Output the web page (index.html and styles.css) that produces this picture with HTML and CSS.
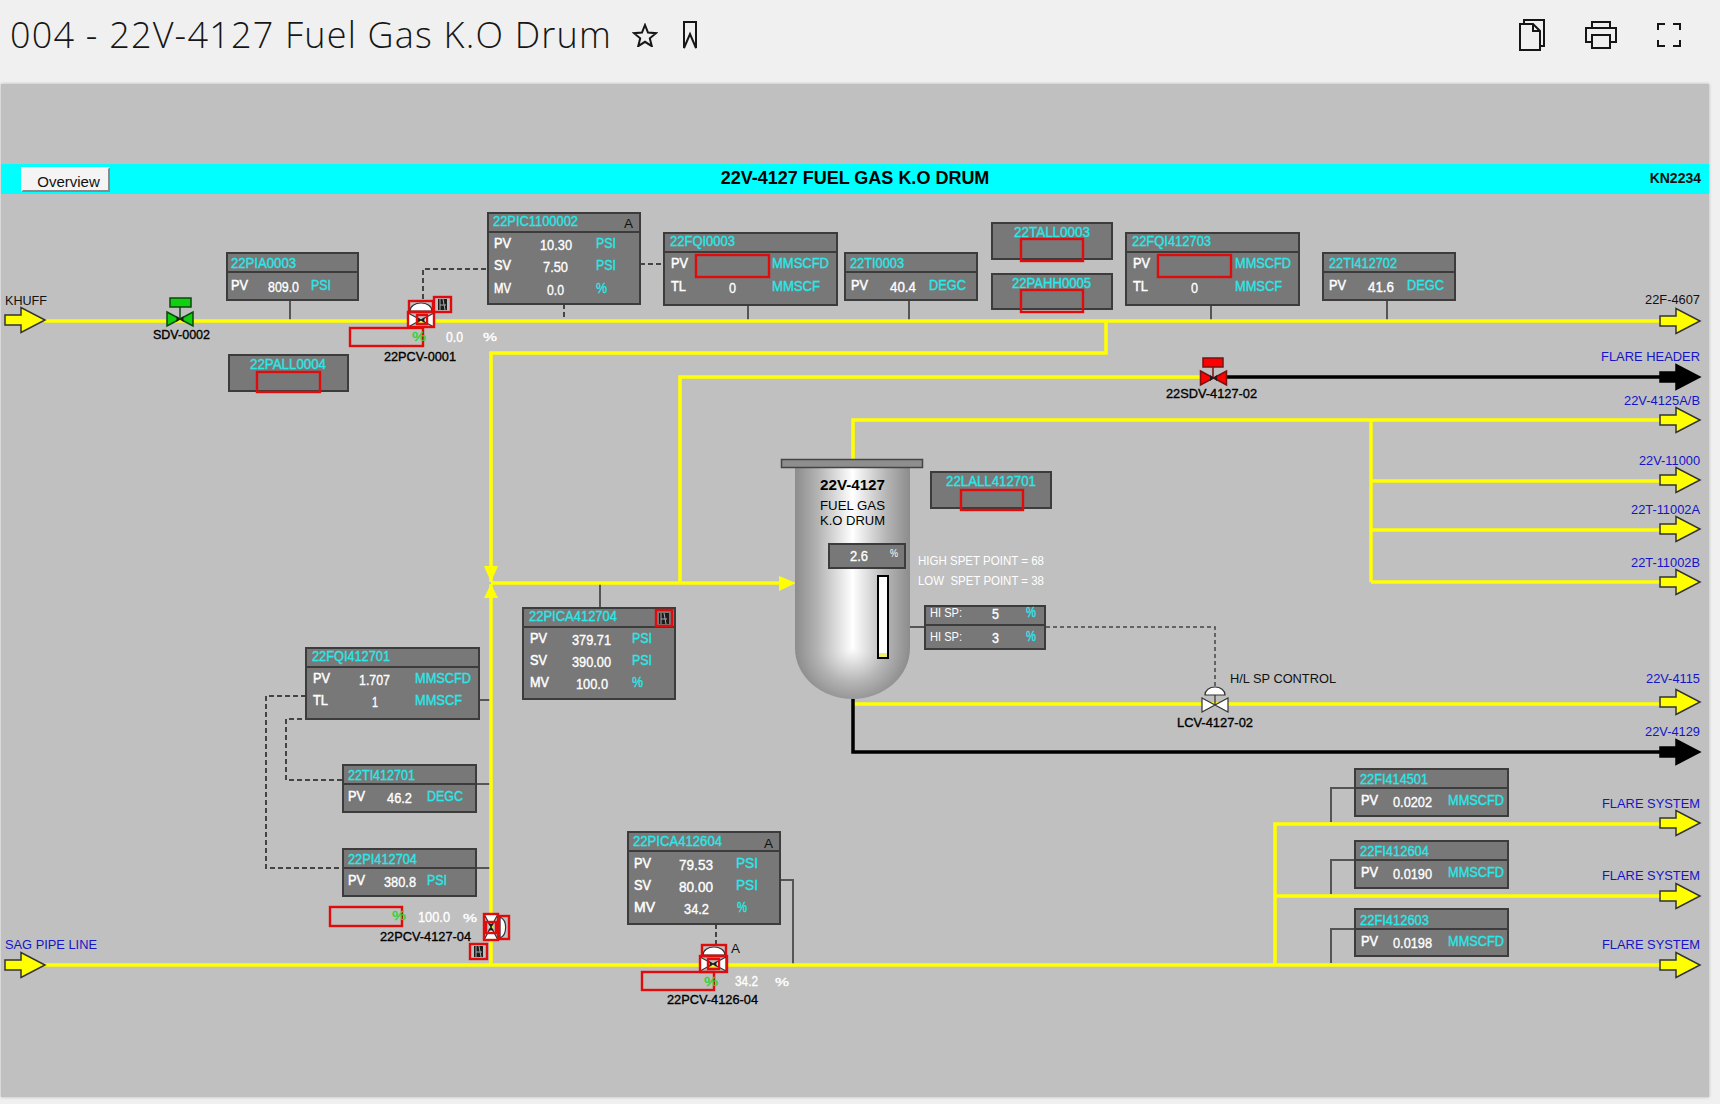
FILE: index.html
```html
<!DOCTYPE html>
<html lang="en">
<head>
    <meta charset="UTF-8">
    <meta name="viewport" content="width=device-width, initial-scale=1.0">
    <title>004 - 22V-4127 Fuel Gas K.O Drum</title>
    <link rel="stylesheet" href="styles.css">
</head>
<body>
    <header class="topbar">
        <h1 class="page-title">004 - 22V-4127 Fuel Gas K.O Drum</h1>
        <div class="title-icons">
            <svg class="icon-star" viewBox="0 0 26 24"><path d="M13 2l3 7.6 8 .6-6.2 5.1 2 7.9L13 18.8l-6.8 4.4 2-7.9L2 10.200l8-.6z"/></svg>
            <svg class="icon-mark" viewBox="0 0 14 28"><path d="M1 1h12v26L7 13 1 27zM1 19"/></svg>
        </div>
        <div class="tools">
            <svg class="icon-copy" viewBox="0 0 26 32"><path d="M5 4V1h20v26h-4"/><path d="M1 5h13l7 7v19H1z"/><path d="M14 5v7h7"/></svg>
            <svg class="icon-print" viewBox="0 0 32 28"><path d="M7 7V1h18v6"/><path d="M7 21H1V7h30v14h-6"/><path d="M7 14h18v13H7z"/></svg>
            <svg class="icon-full" viewBox="0 0 24 24"><path d="M1 7V1h7M16 1h7v6M23 17v6h-7M8 23H1v-6"/></svg>
        </div>
    </header>

    <main class="canvas">
        <div class="banner">
            <button class="overview">Overview</button>
            <div class="banner-title">22V-4127 FUEL GAS K.O DRUM</div>
            <div class="banner-tag">KN2234</div>
        </div>

        <svg class="diagram" viewBox="1 84 1708 1013">
            <defs>
                <path id="arrow" d="M-40-5H-24V-12.500L0 0-24 12.500V5H-40z"/>
                <path id="bowtie-plain" d="M-13-7L13 7V-7L-13 7z"/>
                <g id="bowtie">
                    <path d="M-13-7L13 7V-7L-13 7z"/>
                    <path class="core" d="M-3.500-3L3.500 3V-3L-3.500 3z"/>
                </g>
                <linearGradient id="drum-body" gradientUnits="userSpaceOnUse" x1="795" y1="0" x2="910" y2="0">
                    <stop offset="0" stop-color="#8c8c8c"/>
                    <stop offset=".2" stop-color="#b4b4b4"/>
                    <stop offset=".5" stop-color="#fff"/>
                    <stop offset=".8" stop-color="#b4b4b4"/>
                    <stop offset="1" stop-color="#8c8c8c"/>
                </linearGradient>
                <radialGradient id="drum-cap" gradientUnits="userSpaceOnUse" cx="852.500" cy="648" r="57.500">
                    <stop offset="0" stop-color="#fff"/>
                    <stop offset=".6" stop-color="#b4b4b4"/>
                    <stop offset="1" stop-color="#8c8c8c"/>
                </radialGradient>
            </defs>

            <!-- signal lines -->
            <path class="wire" d="M290 300V320M748 305V320M909 300V320M1211 305V320M1387 300V320"/>
            <path class="wire" d="M600 584V607M479 700H490M476 784H490M476 868H490"/>
            <path class="wire" d="M781 880H793V964M909 627H925"/>
            <path class="wire" d="M1355 788H1331V822M1355 860H1331V894M1355 929H1331V963"/>
            <path class="dash" d="M486 269H423V300M564 304V320M640 264H664M716 924V945"/>
            <path class="dash" d="M306 696H266V868H343M310 719H286V780H343"/>
            <path class="dash thin" d="M1046 627H1215V686"/>

            <!-- pipes -->
            <path class="pipe" d="M44 321H1662"/>
            <path class="pipe" d="M1106 321V353H491V582"/>
            <path class="pipe" d="M491 584V965"/>
            <path class="pipe" d="M491 583H780"/>
            <path class="pipe" d="M680 583V377H1202"/>
            <path class="pipe" d="M853 459V420H1662"/>
            <path class="pipe" d="M1371 420V582"/>
            <path class="pipe" d="M1371 481H1662"/>
            <path class="pipe" d="M1371 530H1662"/>
            <path class="pipe" d="M1371 582H1662"/>
            <path class="pipe" d="M853 704H1662"/>
            <path class="pipe" d="M44 965H1662"/>
            <path class="pipe" d="M1662 824H1275V965"/>
            <path class="pipe" d="M1275 896H1662"/>
            <path class="pipe-black" d="M1226 377H1662"/>
            <path class="pipe-black" d="M853 699V752H1662"/>

            <!-- pipe ends -->
            <use class="end" href="#arrow" x="45" y="320"/>
            <use class="end" href="#arrow" x="45" y="965"/>
            <use class="end" href="#arrow" x="1700" y="321"/>
            <use class="end black" href="#arrow" x="1700" y="377"/>
            <use class="end" href="#arrow" x="1700" y="420"/>
            <use class="end" href="#arrow" x="1700" y="480"/>
            <use class="end" href="#arrow" x="1700" y="529"/>
            <use class="end" href="#arrow" x="1700" y="582"/>
            <use class="end" href="#arrow" x="1700" y="702"/>
            <use class="end black" href="#arrow" x="1700" y="752"/>
            <use class="end" href="#arrow" x="1700" y="823"/>
            <use class="end" href="#arrow" x="1700" y="896"/>
            <use class="end" href="#arrow" x="1700" y="965"/>
            <path class="head" d="M484 566H498L491 582z"/>
            <path class="head" d="M484 598H498L491 584z"/>
            <path class="head" d="M779 576L796 583 779 591z"/>

            <!-- line names -->
            <text class="name plain" x="5" y="305" textLength="42" lengthAdjust="spacingAndGlyphs">KHUFF</text>
            <text class="name plain" x="1645" y="304" textLength="55" lengthAdjust="spacingAndGlyphs">22F-4607</text>
            <text class="line-name" x="1601" y="361" textLength="99" lengthAdjust="spacingAndGlyphs">FLARE HEADER</text>
            <text class="line-name" x="1624" y="405" textLength="76" lengthAdjust="spacingAndGlyphs">22V-4125A/B</text>
            <text class="line-name" x="1639" y="465" textLength="61" lengthAdjust="spacingAndGlyphs">22V-11000</text>
            <text class="line-name" x="1631" y="514" textLength="69" lengthAdjust="spacingAndGlyphs">22T-11002A</text>
            <text class="line-name" x="1631" y="567" textLength="69" lengthAdjust="spacingAndGlyphs">22T-11002B</text>
            <text class="line-name" x="1646" y="683" textLength="54" lengthAdjust="spacingAndGlyphs">22V-4115</text>
            <text class="line-name" x="1645" y="736" textLength="55" lengthAdjust="spacingAndGlyphs">22V-4129</text>
            <text class="line-name" x="1602" y="808" textLength="98" lengthAdjust="spacingAndGlyphs">FLARE SYSTEM</text>
            <text class="line-name" x="1602" y="880" textLength="98" lengthAdjust="spacingAndGlyphs">FLARE SYSTEM</text>
            <text class="line-name" x="1602" y="949" textLength="98" lengthAdjust="spacingAndGlyphs">FLARE SYSTEM</text>
            <text class="line-name" x="5" y="949" textLength="92" lengthAdjust="spacingAndGlyphs">SAG PIPE LINE</text>

            <!-- SDV-0002 -->
            <g class="green-valve">
                <path class="stem" d="M180 307V318"/>
                <rect x="170" y="298" width="21" height="9"/>
                <use href="#bowtie" x="180" y="319"/>
            </g>
            <text class="name" x="153" y="339" textLength="57" lengthAdjust="spacingAndGlyphs">SDV-0002</text>

            <!-- 22SDV-4127-02 -->
            <g class="red-valve">
                <path class="stem" d="M1213 367V378"/>
                <rect x="1203" y="358" width="20" height="9"/>
                <use href="#bowtie" x="1213.500" y="378"/>
            </g>
            <text class="name" x="1166" y="398" textLength="91" lengthAdjust="spacingAndGlyphs">22SDV-4127-02</text>

            <!-- LCV-4127-02 -->
            <g class="white-valve">
                <path class="stem" d="M1215 695V705"/>
                <path d="M1205 695A10 8 0 0 1 1225 695z"/>
                <use href="#bowtie-plain" x="1215" y="705"/>
            </g>
            <text class="name" x="1177" y="727" textLength="76" lengthAdjust="spacingAndGlyphs">LCV-4127-02</text>
            <text class="name plain" x="1230" y="683" textLength="106" lengthAdjust="spacingAndGlyphs">H/L SP CONTROL</text>

            <!-- 22PCV-0001 -->
            <g class="white-valve">
                <path d="M410 311A11 8 0 0 1 432 311z"/>
                <use href="#bowtie" x="421" y="320"/>
            </g>
            <rect class="alarm" x="409" y="301" width="24" height="11"/>
            <rect class="alarm" x="408" y="312" width="26" height="15"/>
            <rect class="alarm" x="417" y="315" width="10" height="9"/>
            <rect class="alarm" x="434" y="297" width="17" height="15"/>
            <rect class="glyph" x="438" y="299" width="9" height="11"/>
            <path class="glyph-mark" d="M440 299V310M443 299L445 310M440 305H446"/>
            <rect class="alarm" x="350" y="328" width="73" height="18"/>
            <text class="pct" x="412" y="341" textLength="14" lengthAdjust="spacingAndGlyphs">%</text>
            <text class="readout" x="446" y="342" textLength="17" lengthAdjust="spacingAndGlyphs">0.0</text>
            <text class="readout small" x="483" y="341" textLength="14" lengthAdjust="spacingAndGlyphs">%</text>
            <text class="name" x="384" y="361" textLength="72" lengthAdjust="spacingAndGlyphs">22PCV-0001</text>

            <!-- 22PCV-4127-04 -->
            <g class="white-valve">
                <path d="M500 917A8 11 0 0 1 500 938z"/>
                <use href="#bowtie" transform="translate(491 927) rotate(90)"/>
            </g>
            <rect class="alarm" x="484" y="914" width="14" height="26"/>
            <rect class="alarm" x="486" y="922" width="10" height="11"/>
            <rect class="alarm" x="499" y="916" width="10" height="23"/>
            <rect class="alarm" x="470" y="944" width="17" height="15"/>
            <rect class="glyph" x="474" y="946" width="9" height="11"/>
            <path class="glyph-mark" d="M476 946V957M479 946L481 957M476 952H482"/>
            <rect class="alarm" x="330" y="907" width="72" height="19"/>
            <text class="pct" x="392" y="920" textLength="14" lengthAdjust="spacingAndGlyphs">%</text>
            <text class="readout" x="418" y="922" textLength="32" lengthAdjust="spacingAndGlyphs">100.0</text>
            <text class="readout small" x="463" y="922" textLength="14" lengthAdjust="spacingAndGlyphs">%</text>
            <text class="name" x="380" y="941" textLength="91" lengthAdjust="spacingAndGlyphs">22PCV-4127-04</text>

            <!-- 22PCV-4126-04 -->
            <g class="white-valve">
                <path d="M703 955A11 8 0 0 1 725 955z"/>
                <use href="#bowtie" x="713" y="964"/>
            </g>
            <rect class="alarm" x="702" y="945" width="24" height="11"/>
            <rect class="alarm" x="700" y="956" width="27" height="16"/>
            <rect class="alarm" x="708" y="959" width="11" height="10"/>
            <rect class="alarm" x="642" y="972" width="72" height="18"/>
            <text class="pct" x="704" y="986" textLength="14" lengthAdjust="spacingAndGlyphs">%</text>
            <text class="readout" x="735" y="986" textLength="23" lengthAdjust="spacingAndGlyphs">34.2</text>
            <text class="readout small" x="775" y="986" textLength="14" lengthAdjust="spacingAndGlyphs">%</text>
            <text class="name plain" x="731" y="953" textLength="9" lengthAdjust="spacingAndGlyphs">A</text>
            <text class="name" x="667" y="1004" textLength="91" lengthAdjust="spacingAndGlyphs">22PCV-4126-04</text>

            <!-- drum -->
            <path fill="url(#drum-body)" d="M795 467H910V648H795z"/>
            <path fill="url(#drum-cap)" d="M795 648A57.500 51 0 0 0 910 648z"/>
            <rect class="flange" x="781.500" y="459.500" width="141" height="8"/>
            <text class="drum-name strong" x="820" y="490" textLength="65" lengthAdjust="spacingAndGlyphs">22V-4127</text>
            <text class="drum-name" x="820" y="510" textLength="65" lengthAdjust="spacingAndGlyphs">FUEL GAS</text>
            <text class="drum-name" x="820" y="525" textLength="65" lengthAdjust="spacingAndGlyphs">K.O DRUM</text>
            <rect class="box" x="829" y="544" width="76" height="24"/>
            <text class="readout big" x="850" y="561" textLength="18" lengthAdjust="spacingAndGlyphs">2.6</text>
            <text class="readout tiny" x="890" y="557" textLength="8" lengthAdjust="spacingAndGlyphs">%</text>
            <rect class="level" x="878" y="576" width="10" height="82"/>
            <rect class="level-fill" x="879" y="653" width="8" height="4"/>
            <text class="note" x="918" y="565" textLength="126" lengthAdjust="spacingAndGlyphs">HIGH SPET POINT = 68</text>
            <text class="note" x="918" y="585" textLength="126" lengthAdjust="spacingAndGlyphs" xml:space="preserve">LOW  SPET POINT = 38</text>

            <!-- 22PIA0003 -->
            <rect class="box" x="227" y="253" width="131" height="47"/>
            <path class="rule" d="M227 272H358"/>
            <text class="tag" x="231" y="268" textLength="65" lengthAdjust="spacingAndGlyphs">22PIA0003</text>
            <text class="key" x="231" y="290" textLength="17" lengthAdjust="spacingAndGlyphs">PV</text>
            <text class="val" x="268" y="292" textLength="31" lengthAdjust="spacingAndGlyphs">809.0</text>
            <text class="unit" x="311" y="290" textLength="20" lengthAdjust="spacingAndGlyphs">PSI</text>

            <!-- 22PALL0004 -->
            <rect class="box" x="229" y="355" width="119" height="36"/>
            <text class="tag" x="250" y="369" textLength="76" lengthAdjust="spacingAndGlyphs">22PALL0004</text>
            <rect class="alarm" x="257" y="372" width="63" height="20"/>

            <!-- 22PIC1100002 -->
            <rect class="box" x="488" y="213" width="152" height="91"/>
            <path class="rule" d="M488 232H640"/>
            <text class="tag" x="493" y="226" textLength="85" lengthAdjust="spacingAndGlyphs">22PIC1100002</text>
            <text class="name plain" x="624" y="228" textLength="9" lengthAdjust="spacingAndGlyphs">A</text>
            <text class="key" x="494" y="248" textLength="17" lengthAdjust="spacingAndGlyphs">PV</text>
            <text class="val" x="540" y="250" textLength="32" lengthAdjust="spacingAndGlyphs">10.30</text>
            <text class="unit" x="596" y="248" textLength="20" lengthAdjust="spacingAndGlyphs">PSI</text>
            <text class="key" x="494" y="270" textLength="17" lengthAdjust="spacingAndGlyphs">SV</text>
            <text class="val" x="543" y="272" textLength="25" lengthAdjust="spacingAndGlyphs">7.50</text>
            <text class="unit" x="596" y="270" textLength="20" lengthAdjust="spacingAndGlyphs">PSI</text>
            <text class="key" x="494" y="293" textLength="17" lengthAdjust="spacingAndGlyphs">MV</text>
            <text class="val" x="547" y="295" textLength="17" lengthAdjust="spacingAndGlyphs">0.0</text>
            <text class="unit" x="596" y="293" textLength="11" lengthAdjust="spacingAndGlyphs">%</text>

            <!-- 22FQI0003 -->
            <rect class="box" x="664" y="233" width="173" height="72"/>
            <path class="rule" d="M664 252H837"/>
            <text class="tag" x="670" y="246" textLength="65" lengthAdjust="spacingAndGlyphs">22FQI0003</text>
            <text class="key" x="671" y="268" textLength="17" lengthAdjust="spacingAndGlyphs">PV</text>
            <rect class="alarm" x="696" y="255" width="73" height="22"/>
            <text class="unit" x="772" y="268" textLength="57" lengthAdjust="spacingAndGlyphs">MMSCFD</text>
            <text class="key" x="671" y="291" textLength="15" lengthAdjust="spacingAndGlyphs">TL</text>
            <text class="val" x="729" y="293" textLength="7" lengthAdjust="spacingAndGlyphs">0</text>
            <text class="unit" x="772" y="291" textLength="48" lengthAdjust="spacingAndGlyphs">MMSCF</text>

            <!-- 22TI0003 -->
            <rect class="box" x="845" y="253" width="132" height="47"/>
            <path class="rule" d="M845 272H977"/>
            <text class="tag" x="850" y="268" textLength="54" lengthAdjust="spacingAndGlyphs">22TI0003</text>
            <text class="key" x="851" y="290" textLength="17" lengthAdjust="spacingAndGlyphs">PV</text>
            <text class="val" x="890" y="292" textLength="26" lengthAdjust="spacingAndGlyphs">40.4</text>
            <text class="unit" x="929" y="290" textLength="37" lengthAdjust="spacingAndGlyphs">DEGC</text>

            <!-- 22TALL0003 / 22PAHH0005 -->
            <rect class="box" x="992" y="223" width="120" height="36"/>
            <text class="tag" x="1014" y="237" textLength="76" lengthAdjust="spacingAndGlyphs">22TALL0003</text>
            <rect class="alarm" x="1021" y="239" width="62" height="22"/>
            <rect class="box" x="992" y="274" width="120" height="35"/>
            <text class="tag" x="1012" y="288" textLength="79" lengthAdjust="spacingAndGlyphs">22PAHH0005</text>
            <rect class="alarm" x="1021" y="290" width="62" height="22"/>

            <!-- 22FQI412703 -->
            <rect class="box" x="1126" y="233" width="173" height="72"/>
            <path class="rule" d="M1126 252H1299"/>
            <text class="tag" x="1132" y="246" textLength="79" lengthAdjust="spacingAndGlyphs">22FQI412703</text>
            <text class="key" x="1133" y="268" textLength="17" lengthAdjust="spacingAndGlyphs">PV</text>
            <rect class="alarm" x="1158" y="255" width="73" height="22"/>
            <text class="unit" x="1235" y="268" textLength="56" lengthAdjust="spacingAndGlyphs">MMSCFD</text>
            <text class="key" x="1133" y="291" textLength="15" lengthAdjust="spacingAndGlyphs">TL</text>
            <text class="val" x="1191" y="293" textLength="7" lengthAdjust="spacingAndGlyphs">0</text>
            <text class="unit" x="1235" y="291" textLength="47" lengthAdjust="spacingAndGlyphs">MMSCF</text>

            <!-- 22TI412702 -->
            <rect class="box" x="1323" y="253" width="132" height="47"/>
            <path class="rule" d="M1323 272H1455"/>
            <text class="tag" x="1329" y="268" textLength="68" lengthAdjust="spacingAndGlyphs">22TI412702</text>
            <text class="key" x="1329" y="290" textLength="17" lengthAdjust="spacingAndGlyphs">PV</text>
            <text class="val" x="1368" y="292" textLength="26" lengthAdjust="spacingAndGlyphs">41.6</text>
            <text class="unit" x="1407" y="290" textLength="37" lengthAdjust="spacingAndGlyphs">DEGC</text>

            <!-- 22LALL412701 -->
            <rect class="box" x="931" y="472" width="120" height="36"/>
            <text class="tag" x="946" y="486" textLength="90" lengthAdjust="spacingAndGlyphs">22LALL412701</text>
            <rect class="alarm" x="961" y="490" width="62" height="20"/>

            <!-- HI SP -->
            <rect class="box" x="925" y="606" width="120" height="43"/>
            <path class="rule" d="M925 625H1045"/>
            <text class="note strong" x="930" y="617" textLength="32" lengthAdjust="spacingAndGlyphs">HI SP:</text>
            <text class="val" x="992" y="619" textLength="7" lengthAdjust="spacingAndGlyphs">5</text>
            <text class="unit" x="1026" y="617" textLength="10" lengthAdjust="spacingAndGlyphs">%</text>
            <text class="note strong" x="930" y="641" textLength="32" lengthAdjust="spacingAndGlyphs">HI SP:</text>
            <text class="val" x="992" y="643" textLength="7" lengthAdjust="spacingAndGlyphs">3</text>
            <text class="unit" x="1026" y="641" textLength="10" lengthAdjust="spacingAndGlyphs">%</text>

            <!-- 22PICA412704 -->
            <rect class="box" x="523" y="608" width="152" height="91"/>
            <path class="rule" d="M523 627H675"/>
            <text class="tag" x="529" y="621" textLength="88" lengthAdjust="spacingAndGlyphs">22PICA412704</text>
            <rect class="alarm" x="656" y="610" width="16" height="16"/>
            <rect class="glyph" x="659" y="613" width="10" height="11"/>
            <path class="glyph-mark" d="M661 613V624M664 613L666 624M661 619H667"/>
            <text class="key" x="530" y="643" textLength="17" lengthAdjust="spacingAndGlyphs">PV</text>
            <text class="val" x="572" y="645" textLength="39" lengthAdjust="spacingAndGlyphs">379.71</text>
            <text class="unit" x="632" y="643" textLength="20" lengthAdjust="spacingAndGlyphs">PSI</text>
            <text class="key" x="530" y="665" textLength="17" lengthAdjust="spacingAndGlyphs">SV</text>
            <text class="val" x="572" y="667" textLength="39" lengthAdjust="spacingAndGlyphs">390.00</text>
            <text class="unit" x="632" y="665" textLength="20" lengthAdjust="spacingAndGlyphs">PSI</text>
            <text class="key" x="530" y="687" textLength="19" lengthAdjust="spacingAndGlyphs">MV</text>
            <text class="val" x="576" y="689" textLength="32" lengthAdjust="spacingAndGlyphs">100.0</text>
            <text class="unit" x="632" y="687" textLength="11" lengthAdjust="spacingAndGlyphs">%</text>

            <!-- 22FQI412701 -->
            <rect class="box" x="306" y="648" width="173" height="71"/>
            <path class="rule" d="M306 667H479"/>
            <text class="tag" x="312" y="661" textLength="78" lengthAdjust="spacingAndGlyphs">22FQI412701</text>
            <text class="key" x="313" y="683" textLength="17" lengthAdjust="spacingAndGlyphs">PV</text>
            <text class="val" x="359" y="685" textLength="31" lengthAdjust="spacingAndGlyphs">1.707</text>
            <text class="unit" x="415" y="683" textLength="56" lengthAdjust="spacingAndGlyphs">MMSCFD</text>
            <text class="key" x="313" y="705" textLength="15" lengthAdjust="spacingAndGlyphs">TL</text>
            <text class="val" x="372" y="707" textLength="6" lengthAdjust="spacingAndGlyphs">1</text>
            <text class="unit" x="415" y="705" textLength="47" lengthAdjust="spacingAndGlyphs">MMSCF</text>

            <!-- 22TI412701 -->
            <rect class="box" x="343" y="765" width="133" height="47"/>
            <path class="rule" d="M343 784H476"/>
            <text class="tag" x="348" y="780" textLength="67" lengthAdjust="spacingAndGlyphs">22TI412701</text>
            <text class="key" x="348" y="801" textLength="17" lengthAdjust="spacingAndGlyphs">PV</text>
            <text class="val" x="387" y="803" textLength="25" lengthAdjust="spacingAndGlyphs">46.2</text>
            <text class="unit" x="427" y="801" textLength="36" lengthAdjust="spacingAndGlyphs">DEGC</text>

            <!-- 22PI412704 -->
            <rect class="box" x="343" y="849" width="133" height="47"/>
            <path class="rule" d="M343 868H476"/>
            <text class="tag" x="348" y="864" textLength="69" lengthAdjust="spacingAndGlyphs">22PI412704</text>
            <text class="key" x="348" y="885" textLength="17" lengthAdjust="spacingAndGlyphs">PV</text>
            <text class="val" x="384" y="887" textLength="32" lengthAdjust="spacingAndGlyphs">380.8</text>
            <text class="unit" x="427" y="885" textLength="20" lengthAdjust="spacingAndGlyphs">PSI</text>

            <!-- 22PICA412604 -->
            <rect class="box" x="628" y="832" width="152" height="92"/>
            <path class="rule" d="M628 851H780"/>
            <text class="tag" x="633" y="846" textLength="89" lengthAdjust="spacingAndGlyphs">22PICA412604</text>
            <text class="name plain" x="764" y="848" textLength="9" lengthAdjust="spacingAndGlyphs">A</text>
            <text class="key" x="634" y="868" textLength="17" lengthAdjust="spacingAndGlyphs">PV</text>
            <text class="val" x="679" y="870" textLength="34" lengthAdjust="spacingAndGlyphs">79.53</text>
            <text class="unit" x="736" y="868" textLength="22" lengthAdjust="spacingAndGlyphs">PSI</text>
            <text class="key" x="634" y="890" textLength="17" lengthAdjust="spacingAndGlyphs">SV</text>
            <text class="val" x="679" y="892" textLength="34" lengthAdjust="spacingAndGlyphs">80.00</text>
            <text class="unit" x="736" y="890" textLength="22" lengthAdjust="spacingAndGlyphs">PSI</text>
            <text class="key" x="634" y="912" textLength="21" lengthAdjust="spacingAndGlyphs">MV</text>
            <text class="val" x="684" y="914" textLength="25" lengthAdjust="spacingAndGlyphs">34.2</text>
            <text class="unit" x="737" y="912" textLength="10" lengthAdjust="spacingAndGlyphs">%</text>

            <!-- 22FI414501 -->
            <rect class="box" x="1355" y="769" width="153" height="47"/>
            <path class="rule" d="M1355 788H1508"/>
            <text class="tag" x="1360" y="784" textLength="68" lengthAdjust="spacingAndGlyphs">22FI414501</text>
            <text class="key" x="1361" y="805" textLength="17" lengthAdjust="spacingAndGlyphs">PV</text>
            <text class="val" x="1393" y="807" textLength="39" lengthAdjust="spacingAndGlyphs">0.0202</text>
            <text class="unit" x="1448" y="805" textLength="56" lengthAdjust="spacingAndGlyphs">MMSCFD</text>

            <!-- 22FI412604 -->
            <rect class="box" x="1355" y="841" width="153" height="47"/>
            <path class="rule" d="M1355 860H1508"/>
            <text class="tag" x="1360" y="856" textLength="69" lengthAdjust="spacingAndGlyphs">22FI412604</text>
            <text class="key" x="1361" y="877" textLength="17" lengthAdjust="spacingAndGlyphs">PV</text>
            <text class="val" x="1393" y="879" textLength="39" lengthAdjust="spacingAndGlyphs">0.0190</text>
            <text class="unit" x="1448" y="877" textLength="56" lengthAdjust="spacingAndGlyphs">MMSCFD</text>

            <!-- 22FI412603 -->
            <rect class="box" x="1355" y="909" width="153" height="47"/>
            <path class="rule" d="M1355 929H1508"/>
            <text class="tag" x="1360" y="925" textLength="69" lengthAdjust="spacingAndGlyphs">22FI412603</text>
            <text class="key" x="1361" y="946" textLength="17" lengthAdjust="spacingAndGlyphs">PV</text>
            <text class="val" x="1393" y="948" textLength="39" lengthAdjust="spacingAndGlyphs">0.0198</text>
            <text class="unit" x="1448" y="946" textLength="56" lengthAdjust="spacingAndGlyphs">MMSCFD</text>
        </svg>
    </main>
</body>
</html>
```

FILE: styles.css
```css
body {
    margin: 0;
    height: 1104px;
    overflow: hidden;
    background-color: #f0f0f0;
    font-family: "Liberation Sans", Arial, sans-serif;
}

.topbar {
    height: 84px;
    box-sizing: border-box;
    padding-bottom: 15px;
    display: flex;
    align-items: center;
}
.page-title {
    margin: 0 0 0 10px;
    font-family: "Open Sans", sans-serif;
    font-size: 36px;
    font-weight: 300;
    letter-spacing: 1.200px;
    color: #161616;
    white-space: nowrap;
}
.title-icons {
    display: flex;
    align-items: center;
    gap: 25px;
    margin-left: 20px;
}
.tools {
    display: flex;
    align-items: center;
    gap: 40px;
    margin-left: auto;
    margin-right: 39px;
}
.topbar svg {
    fill: none;
    stroke: #161616;
    stroke-width: 2;
}
.icon-star { width: 26px; height: 24px; }
.icon-mark { width: 14px; height: 28px; }
.icon-copy { width: 26px; height: 32px; }
.icon-print { width: 32px; height: 28px; }
.icon-full { width: 24px; height: 24px; }

.canvas {
    position: relative;
    width: 1708px;
    height: 1013px;
    margin-left: 1px;
    padding-top: 80px;
    box-sizing: border-box;
    background-color: #c0c0c0;
    box-shadow: 0 0 3px rgba(0, 0, 0, .25);
}
.banner {
    height: 30px;
    display: grid;
    grid-template-columns: 1fr auto 1fr;
    align-items: center;
    background-color: #00ffff;
}
.overview {
    justify-self: start;
    width: 89px;
    height: 25px;
    margin-left: 20px;
    padding: 5px 0 0 6px;
    border: 2px solid;
    border-color: #fff #8a8a8a #8a8a8a #fff;
    background-color: #f4f4f4;
    font-family: "Liberation Sans", Arial, sans-serif;
    font-size: 15px;
    line-height: 16px;
    color: #111;
}
.banner-title {
    padding-bottom: 2px;
    font-size: 18px;
    font-weight: bold;
    color: #000;
}
.banner-tag {
    justify-self: end;
    padding: 0 8px 3px 0;
    font-size: 14px;
    font-weight: bold;
    color: #111;
}

.diagram {
    position: absolute;
    top: 0;
    left: 0;
    width: 1708px;
    height: 1013px;
}
.diagram text {
    font-family: "Liberation Sans", Arial, sans-serif;
}

.pipe, .pipe-black, .wire, .dash, .rule, .stem {
    fill: none;
}
.pipe { stroke: #ffff00; stroke-width: 3.500; }
.pipe-black { stroke: #000; stroke-width: 3.500; }
.wire { stroke: #555; stroke-width: 2; }
.dash { stroke: #444; stroke-width: 2; stroke-dasharray: 5 3; }
.dash.thin { stroke-width: 1.500; stroke-dasharray: 4 3; }
.rule { stroke: #3c3c3c; stroke-width: 2; }

.end { fill: #ffff00; stroke: #333; stroke-width: 1.500; }
.end.black { fill: #000; stroke: #000; }
.head { fill: #ffff00; }

.box { fill: #787878; stroke: #3c3c3c; stroke-width: 2; }
.alarm { fill: none; stroke: #e00c0c; stroke-width: 2.400; }
.core { fill: #1c1c1c; stroke: none; }
.glyph { fill: #1c1c1c; }
.glyph-mark { fill: none; stroke: #aaa; stroke-width: 1; }

.green-valve { fill: #10d010; stroke: #0a4a0a; stroke-width: 1.500; }
.red-valve { fill: #ff0000; stroke: #7a1010; stroke-width: 1.500; }
.white-valve { fill: #fff; stroke: #333; stroke-width: 1.200; }

.flange { fill: #8e8e8e; stroke: #444; stroke-width: 1.500; }
.level { fill: #fff; stroke: #000; stroke-width: 2; }
.level-fill { fill: #f4ec70; }

/* regular weight with a hairline stroke, the reference is a blurred semi-bold */
.tag, .key, .val, .unit, .readout, .name, .pct {
    stroke-width: .35px;
    font-weight: normal;
}
.tag { fill: #28e8e8; stroke: #28e8e8; font-size: 14px; }
.key { fill: #fff; stroke: #fff; font-size: 14px; stroke-width: .5px; }
.val { fill: #fff; stroke: #fff; font-size: 14px; }
.unit { fill: #28e8e8; stroke: #28e8e8; font-size: 14px; }
.name { fill: #000; stroke: #000; font-size: 13px; }
.name.plain { stroke: none; fill: #111; }
.line-name { fill: #1414c8; font-size: 13.500px; }
.pct { fill: #32d232; stroke: #32d232; font-size: 12px; }
.readout { fill: #fff; stroke: #fff; font-size: 14px; }
.readout.big { font-size: 15px; }
.readout.small { font-size: 11px; }
.readout.tiny { font-size: 11px; stroke: none; }
.note { fill: #fff; font-size: 12.500px; }
.drum-name { fill: #000; font-size: 13.500px; }
.drum-name.strong { font-size: 14.500px; font-weight: bold; }
```
